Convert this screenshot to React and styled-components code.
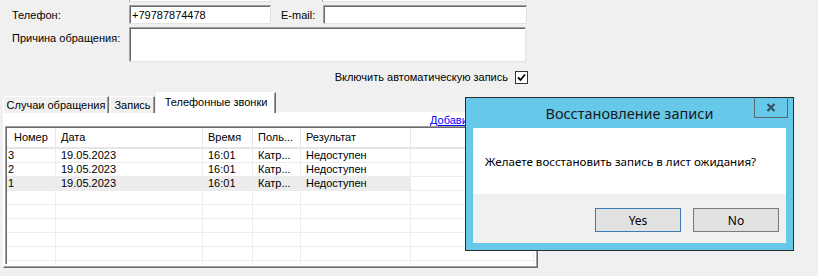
import React from 'react'
import styled, { createGlobalStyle } from 'styled-components'

const GlobalStyle = createGlobalStyle`
  html, body {
    margin: 0;
    padding: 0;
    background: #f0f0f0;
  }
  body {
    font-family: "Liberation Sans", Arial, sans-serif;
    font-size: 11px;
    color: #000;
  }
`

const Screen = styled.div`
  position: relative;
  width: 818px;
  height: 276px;
  overflow: hidden;
  background: #f0f0f0;
`

const Row = styled.div`
  display: flex;
  align-items: ${p => p.$align || 'center'};
  height: ${p => p.$h}px;
  margin-top: ${p => p.$mt || 0}px;
  padding-left: ${p => p.$pl || 0}px;
`

const CutBox = styled.div`
  height: 1px;
  width: ${p => p.$w}px;
  margin-left: ${p => p.$ml}px;
  background: #fff;
  border-bottom: 1px solid #e3e3e3;
  border-left: 1px solid #a0a0a0;
  border-right: 1px solid #e3e3e3;
`

const Label = styled.span`
  width: ${p => p.$w ? `${p.$w}px` : 'auto'};
  margin-left: ${p => p.$ml || 0}px;
  padding-top: ${p => p.$pt || 0}px;
  white-space: nowrap;
`

const TextBox = styled.div`
  box-sizing: border-box;
  width: ${p => p.$w}px;
  height: ${p => p.$h}px;
  background: #fff;
  border-top: 1px solid #a0a0a0;
  border-left: 1px solid #a0a0a0;
  border-bottom: 1px solid #e3e3e3;
  border-right: 1px solid #e3e3e3;
  box-shadow: inset 1px 1px 0 #696969;
  padding: 2px 0 0 2px;
  line-height: 14px;
`

const CheckRow = styled.div`
  display: flex;
  justify-content: flex-end;
  align-items: center;
  gap: 7px;
  width: 528px;
  height: 14px;
  margin-top: 8px;
`

const CheckBox = styled.div`
  box-sizing: border-box;
  width: 13px;
  height: 13px;
  background: #fff;
  border: 1px solid #333;
  display: flex;
  align-items: center;
  justify-content: center;
`

const TabStrip = styled.div`
  display: flex;
  align-items: flex-end;
  height: 21px;
  margin-top: 8px;
  padding-left: 3px;
  margin-bottom: -1px;
  position: relative;
  z-index: 1;
`

const Tab = styled.div`
  box-sizing: border-box;
  width: ${p => p.$w}px;
  height: ${p => p.$active ? 21 : 17}px;
  margin-right: 1px;
  display: flex;
  align-items: center;
  justify-content: center;
  padding-bottom: ${p => p.$active ? 2 : 0}px;
  background: ${p => p.$active ? '#fff' : '#f0f0f0'};
  border-top: 1px solid #fff;
  border-left: 1px solid #fff;
  border-right: 1px solid #696969;
  box-shadow: inset -1px 0 0 #a0a0a0;
  white-space: nowrap;
`

const Panel = styled.div`
  box-sizing: border-box;
  margin-left: 3px;
  width: 535px;
  height: 156px;
  background: #fff;
  border-top: 1px solid #fff;
  border-left: 1px solid #fff;
  border-right: 1px solid #696969;
  border-bottom: 1px solid #696969;
  box-shadow: inset -1px -1px 0 #a0a0a0;
  display: flex;
  flex-direction: column;
  padding: 0 2px 2px 1px;
`

const Toolbar = styled.div`
  height: 13px;
  display: flex;
  align-items: center;
  padding-left: 425px;
`

const Link = styled.a`
  color: #0000ff;
  text-decoration: underline;
  white-space: nowrap;
`

const Grid = styled.div`
  flex: 1;
  box-sizing: border-box;
  border-top: 1px solid #a0a0a0;
  border-left: 1px solid #a0a0a0;
  border-right: 1px solid #fff;
  border-bottom: 1px solid #fff;
  box-shadow: inset 1px 1px 0 #696969, inset -1px -1px 0 #e3e3e3;
  padding: 1px 0 0 1px;
  overflow: hidden;
`

const GridRow = styled.div`
  display: grid;
  grid-template-columns: 49px 147px 50px 48px 110px 1fr;
  height: ${p => p.$header ? 19 : 13}px;
  border-bottom: ${p => p.$header ? '2px solid #e5e5e5' : '1px solid #ececec'};
  background: ${p => p.$selected ? 'linear-gradient(to right, #ececec 403px, #fff 403px)' : '#fff'};
`

const Cell = styled.div`
  border-right: 1px solid ${p => p.$header ? '#e5e5e5' : '#ececec'};
  padding-left: ${p => p.$pl}px;
  line-height: ${p => p.$header ? 19 : 13}px;
  white-space: nowrap;
  overflow: hidden;
`

const Dialog = styled.div`
  position: absolute;
  left: 465px;
  top: 97px;
  width: 329px;
  height: 154px;
  box-sizing: border-box;
  border: 1px solid #2b2b2b;
  background: #66c9ea;
  display: flex;
  flex-direction: column;
  padding: 0 7px 7px 7px;
`

const TitleBar = styled.div`
  height: 29px;
  display: flex;
  align-items: center;
  justify-content: center;
  font-family: "Noto Sans", "Open Sans", sans-serif;
  font-size: 14.5px;
  color: #1a1a1a;
  padding-bottom: 1px;
`

const CloseButton = styled.div`
  position: absolute;
  top: -1px;
  right: 5px;
  width: 34px;
  height: 21px;
  box-sizing: border-box;
  border: 1px solid #5a6770;
  border-top: none;
  display: flex;
  align-items: center;
  justify-content: center;
`

const Client = styled.div`
  flex: 1;
  display: flex;
  flex-direction: column;
  font-family: "Noto Sans", "Open Sans", sans-serif;
  font-size: 11.6px;
`

const MessageArea = styled.div`
  height: 66px;
  background: #fff;
  display: flex;
  align-items: center;
  padding-left: 12px;
  color: #000;
`

const Footer = styled.div`
  flex: 1;
  background: #f0f0f0;
  display: flex;
  justify-content: flex-end;
  align-items: flex-start;
  gap: 12px;
  padding: 14px 7px 0 0;
`

const Button = styled.div`
  box-sizing: border-box;
  width: 86px;
  height: 24px;
  background: #e1e1e1;
  border: 1px solid ${p => p.$default ? '#3d7bb6' : '#7a7a7a'};
  display: flex;
  align-items: center;
  justify-content: center;
  font-size: 12px;
`

const columns = [
  { title: 'Номер', pl: 7 },
  { title: 'Дата', pl: 5 },
  { title: 'Время', pl: 5 },
  { title: 'Поль...', pl: 5 },
  { title: 'Результат', pl: 5 },
  { title: '', pl: 5 }
]

const calls = [
  { n: '3', date: '19.05.2023', time: '16:01', user: 'Катр...', result: 'Недоступен' },
  { n: '2', date: '19.05.2023', time: '16:01', user: 'Катр...', result: 'Недоступен' },
  { n: '1', date: '19.05.2023', time: '16:01', user: 'Катр...', result: 'Недоступен', selected: true }
]

const EMPTY_ROWS = 6

export default function App () {
  return (
    <Screen>
      <GlobalStyle />
      <Row $h={2}>
        <CutBox $ml={129} $w={140} />
        <CutBox $ml={51} $w={202} />
      </Row>
      <Row $h={19} $mt={3} $pl={12}>
        <Label $w={117}>Телефон:</Label>
        <TextBox $w={142} $h={19}>+79787874478</TextBox>
        <Label $ml={10} $w={42}>E-mail:</Label>
        <TextBox $w={204} $h={19} />
      </Row>
      <Row $h={35} $mt={3} $pl={12} $align='flex-start'>
        <Label $w={117} $pt={5}>Причина обращения:</Label>
        <TextBox $w={397} $h={35} />
      </Row>
      <CheckRow>
        <span>Включить автоматическую запись</span>
        <CheckBox>
          <svg width='9' height='9' viewBox='0 0 9 9'>
            <path d='M1 4.5 L3.5 7 L8 1.5' fill='none' stroke='#000' strokeWidth='1.8' />
          </svg>
        </CheckBox>
      </CheckRow>
      <TabStrip>
        <Tab $w={106}>Случаи обращения</Tab>
        <Tab $w={45}>Запись</Tab>
        <Tab $w={120} $active>Телефонные звонки</Tab>
      </TabStrip>
      <Panel>
        <Toolbar>
          <Link href='#'>Добавить</Link>
        </Toolbar>
        <Grid>
          <GridRow $header>
            {columns.map((c, i) => (
              <Cell key={i} $header $pl={c.pl}>{c.title}</Cell>
            ))}
          </GridRow>
          {calls.map(r => (
            <GridRow key={r.n} $selected={r.selected}>
              <Cell $pl={1}>{r.n}</Cell>
              <Cell $pl={5}>{r.date}</Cell>
              <Cell $pl={5}>{r.time}</Cell>
              <Cell $pl={5}>{r.user}</Cell>
              <Cell $pl={5}>{r.result}</Cell>
              <Cell $pl={5} />
            </GridRow>
          ))}
          {Array.from({ length: EMPTY_ROWS }).map((_, i) => (
            <GridRow key={'e' + i}>
              {columns.map((c, j) => <Cell key={j} $pl={5} />)}
            </GridRow>
          ))}
        </Grid>
      </Panel>

      <Dialog>
        <TitleBar>Восстановление записи</TitleBar>
        <CloseButton>
          <svg width='10' height='9' viewBox='0 0 10 9'>
            <path d='M1.5 1 L8.5 8 M8.5 1 L1.5 8' stroke='#35505f' strokeWidth='2.2' />
          </svg>
        </CloseButton>
        <Client>
          <MessageArea>Желаете восстановить запись в лист ожидания?</MessageArea>
          <Footer>
            <Button $default>Yes</Button>
            <Button>No</Button>
          </Footer>
        </Client>
      </Dialog>
    </Screen>
  )
}
